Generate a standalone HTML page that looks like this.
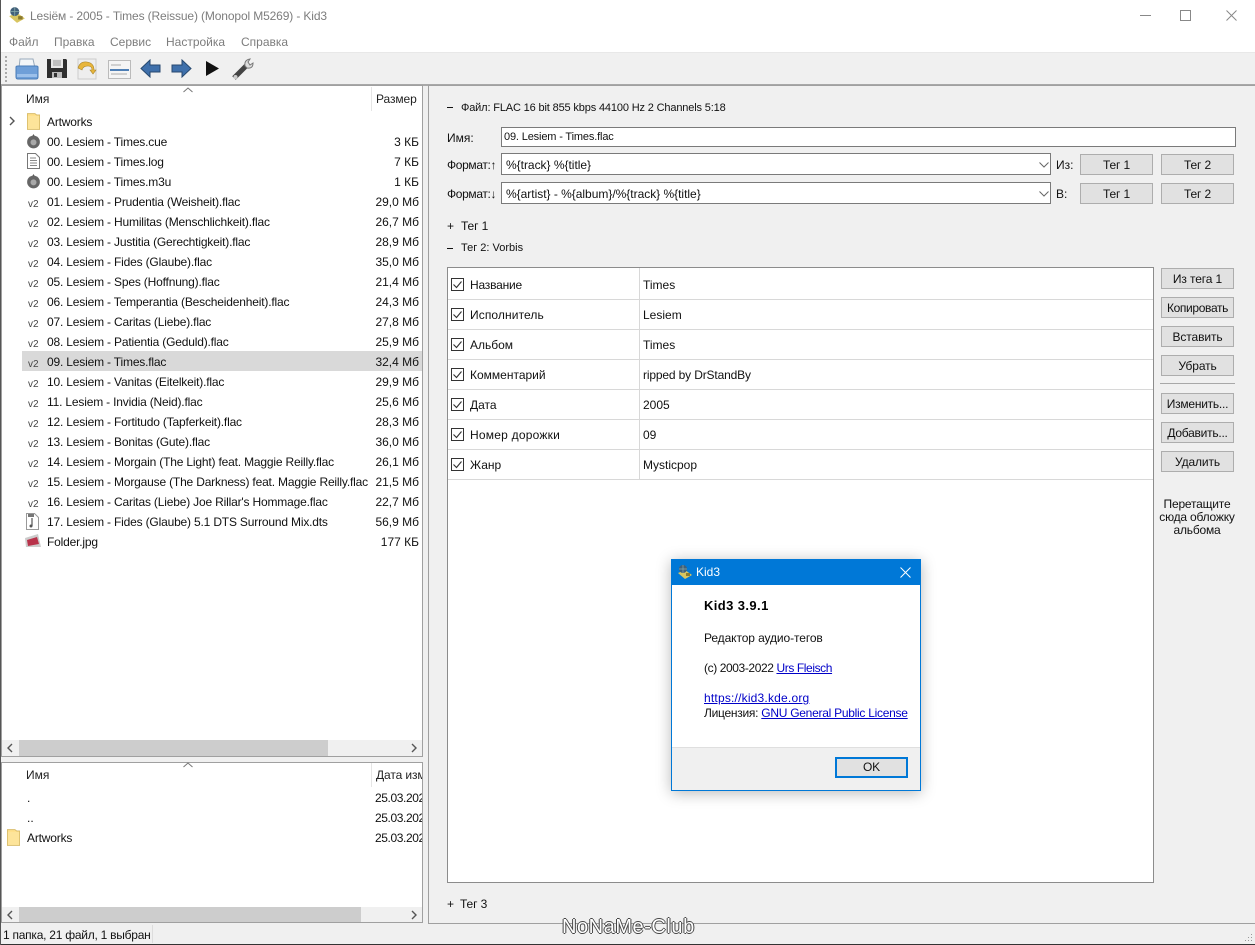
<!DOCTYPE html>
<html lang="ru"><head><meta charset="utf-8"><title>Kid3</title>
<style>
html,body{margin:0;padding:0;width:1255px;height:945px;overflow:hidden;background:#f0f0f0}
body{position:relative;font:12px/20px "Liberation Sans","DejaVu Sans",sans-serif;color:#111}
.t,.b,svg.i{position:absolute}
.t{white-space:nowrap}
.f{letter-spacing:-.18px}
.r{text-align:right}
.b{box-sizing:border-box}
.btn{position:absolute;box-sizing:border-box;width:73px;height:21px;background:#e1e1e1;border:1px solid #adadad;text-align:center;line-height:21px;white-space:nowrap;letter-spacing:-.12px}
.inp{position:absolute;box-sizing:border-box;background:#fff;border:1px solid #7a7a7a;line-height:19px;white-space:nowrap}
.v{position:absolute;left:28px;font-size:10px;line-height:12px;color:#444}
a{color:#0000c8;text-decoration:underline}
.m{color:#7d7d7d}
.hl{position:absolute;left:448px;width:705px;height:1px;background:#d8d8d8}
.cb{position:absolute;left:451px;width:13px;height:13px}
</style></head><body>
<svg width="0" height="0" style="position:absolute"><defs>
<symbol id="disc" viewBox="0 0 16 16"><path d="M8 0.5l1.500 2.500h-3z" fill="#555"/><circle cx="8" cy="9" r="6.800" fill="#666"/><circle cx="8" cy="9.500" r="3.200" fill="#a8a8a8"/></symbol>
<symbol id="fold" viewBox="0 0 14 18"><path d="M.5.5h8l2 1.500h3v15.500h-13z" fill="#ffe08a" stroke="#d9bd6c"/><path d="M1 3h12v14H1z" fill="#fde49a"/></symbol>
<symbol id="chk" viewBox="0 0 13 13"><rect x=".5" y=".5" width="12" height="12" fill="#fff" stroke="#333"/><path d="M2.500 6.500l3 3 5-6" fill="none" stroke="#333" stroke-width="1.100"/></symbol>
<symbol id="app" viewBox="0 0 16 16"><path d="M1 9l7 6 7-4-7-5z" fill="#d8c560"/><circle cx="6" cy="5" r="4" fill="#41607a"/><path d="M6 1v8M2 5h8" stroke="#8aa" stroke-width=".7"/><rect x="9" y="9" width="4" height="3" fill="#8a7a30"/></symbol>
<symbol id="l" viewBox="0 0 6 10"><path d="M5 1L1 5l4 4" fill="none" stroke="#555" stroke-width="1.400"/></symbol>
<symbol id="rr" viewBox="0 0 6 10"><path d="M1 1l4 4-4 4" fill="none" stroke="#555" stroke-width="1.400"/></symbol>
<symbol id="dn" viewBox="0 0 10 6"><path d="M.5.500L5 5 9.500.5" fill="none" stroke="#666"/></symbol>
<symbol id="up" viewBox="0 0 10 6"><path d="M.5 5L5 1l4.500 4" fill="none" stroke="#777"/></symbol>
</defs></svg>

<!-- Title bar & menu -->
<div class="b" style="left:0;top:0;width:1255px;height:52px;background:#fff"></div>
<svg class="i" style="left:8px;top:6px" width="18" height="18"><use href="#app"/></svg>
<div class="t m" style="left:30px;top:6px;letter-spacing:-.13px">Lesiём - 2005 - Times (Reissue) (Monopol M5269) - Kid3</div>
<div class="b" style="left:1140px;top:15px;width:11px;height:1px;background:#888"></div>
<div class="b" style="left:1180px;top:10px;width:11px;height:11px;border:1px solid #888"></div>
<svg class="i" style="left:1226px;top:10px" width="11" height="11"><path d="M.5.5l10 10M10.500.5l-10 10" stroke="#888"/></svg>
<div class="t m" style="left:9px;top:32px">Файл</div>
<div class="t m" style="left:54px;top:32px">Правка</div>
<div class="t m" style="left:110px;top:32px">Сервис</div>
<div class="t m" style="left:166px;top:32px">Настройка</div>
<div class="t m" style="left:241px;top:32px">Справка</div>

<!-- Toolbar -->
<div class="b" style="left:0;top:52px;width:1255px;height:33px;background:#f0f0f0;border-top:1px solid #e8e8e8"></div>
<div class="b" style="left:5px;top:56px;width:2px;height:26px;border-left:2px dotted #aaa"></div>
<svg class="i" style="left:14px;top:58px" width="26" height="22" viewBox="0 0 26 22"><path d="M6 1h13l2 9H5z" fill="#f4f6f8" stroke="#9ab"/><path d="M2 9q0-1 2-1h18q2 0 2 1v10q0 2-2 2H4q-2 0-2-2z" fill="#6f9fd8" stroke="#4a7cb8"/><path d="M3 16h20v3H3z" fill="#9cc0ea"/></svg>
<svg class="i" style="left:47px;top:58px" width="20" height="21" viewBox="0 0 20 21"><path d="M0 1h19l1 1v18H0z" fill="#2f2f2f"/><path d="M4 1h12v9H4z" fill="#e8e8e8"/><path d="M6 3h8M6 5h8M6 7h8" stroke="#999"/><path d="M5 14h10v6H5z" fill="#bcbcbc"/><path d="M7 15h3v4H7z" fill="#333"/></svg>
<svg class="i" style="left:77px;top:58px" width="20" height="22" viewBox="0 0 20 22"><path d="M1 1h18v20H1z" fill="#eee" stroke="#ccc"/><path d="M1 10q2-7 9-6 7 1 7 8h2l-3 4-3-4h2q0-4-4-4-5 0-6 4z" fill="#e8b63c" stroke="#a8842a" stroke-width=".6"/></svg>
<svg class="i" style="left:108px;top:60px" width="23" height="19" viewBox="0 0 23 19"><path d="M.5.500h22v18H.5z" fill="#f5f5f5" stroke="#bbb"/><path d="M3 5h10M3 14h16" stroke="#aaa"/><path d="M2 9h19v2H2z" fill="#4f7fb5"/></svg>
<svg class="i" style="left:140px;top:59px" width="21" height="19" viewBox="0 0 21 19"><path d="M10 1v5h10v7H10v5L1 9.500z" fill="#3f70ab" stroke="#27496f"/></svg>
<svg class="i" style="left:171px;top:59px" width="21" height="19" viewBox="0 0 21 19"><path d="M11 1v5H1v7h10v5l9-8.500z" fill="#3f70ab" stroke="#27496f"/></svg>
<svg class="i" style="left:205px;top:60px" width="15" height="17" viewBox="0 0 15 17"><path d="M1 1l13 7.500L1 16z" fill="#111"/></svg>
<svg class="i" style="left:232px;top:57px" width="23" height="24" viewBox="0 0 23 24"><path d="M2 21L14 9" stroke="#444" stroke-width="5"/><circle cx="3.500" cy="20" r="2" fill="#ccc"/><path d="M13 9q-1-6 5-7l-2 3 2 3 3-2q0 6-6 5z" fill="#ddd" stroke="#777"/></svg>
<div class="b" style="left:0;top:84px;width:1255px;height:2px;background:#a8a8a8"></div>

<!-- Left top pane -->
<div class="b" style="left:1px;top:85px;width:422px;height:672px;background:#fff;border:1px solid #a0a0a0"></div>
<svg class="i" style="left:183px;top:87px" width="10" height="6"><use href="#up"/></svg>
<div class="t" style="left:26px;top:89px;color:#222">Имя</div>
<div class="b" style="left:371px;top:87px;width:1px;height:24px;background:#e5e5e5"></div>
<div class="t" style="left:376px;top:89px;color:#222;letter-spacing:-.1px">Размер</div>
<svg class="i" style="left:9px;top:116px" width="6" height="10"><use href="#rr"/></svg>
<svg class="i" style="left:27px;top:113px" width="13" height="17"><use href="#fold"/></svg>
<div class="t f" style="left:47px;top:112px">Artworks</div>

<svg class="i" style="left:26px;top:133px" width="15" height="16"><use href="#disc"/></svg>
<svg class="i" style="left:27px;top:153px" width="13" height="16" viewBox="0 0 13 16"><path d="M.5.500h8l4 4v11H.5z" fill="#fff" stroke="#777"/><path d="M3 5h6M3 7.500h7M3 10h7M3 12.500h7" stroke="#888"/></svg>
<svg class="i" style="left:26px;top:173px" width="15" height="16"><use href="#disc"/></svg>
<div class="b" style="left:22px;top:351px;width:400px;height:20px;background:#d9d9d9"></div>

<div class="t f" style="left:47px;top:132px">00. Lesiem - Times.cue</div>
<div class="t f" style="left:47px;top:152px">00. Lesiem - Times.log</div>
<div class="t f" style="left:47px;top:172px">00. Lesiem - Times.m3u</div>
<div class="t f" style="left:47px;top:192px">01. Lesiem - Prudentia (Weisheit).flac</div>
<div class="t f" style="left:47px;top:212px">02. Lesiem - Humilitas (Menschlichkeit).flac</div>
<div class="t f" style="left:47px;top:232px">03. Lesiem - Justitia (Gerechtigkeit).flac</div>
<div class="t f" style="left:47px;top:252px">04. Lesiem - Fides (Glaube).flac</div>
<div class="t f" style="left:47px;top:272px">05. Lesiem - Spes (Hoffnung).flac</div>
<div class="t f" style="left:47px;top:292px">06. Lesiem - Temperantia (Bescheidenheit).flac</div>
<div class="t f" style="left:47px;top:312px">07. Lesiem - Caritas (Liebe).flac</div>
<div class="t f" style="left:47px;top:332px">08. Lesiem - Patientia (Geduld).flac</div>
<div class="t f" style="left:47px;top:352px">09. Lesiem - Times.flac</div>
<div class="t f" style="left:47px;top:372px">10. Lesiem - Vanitas (Eitelkeit).flac</div>
<div class="t f" style="left:47px;top:392px">11. Lesiem - Invidia (Neid).flac</div>
<div class="t f" style="left:47px;top:412px">12. Lesiem - Fortitudo (Tapferkeit).flac</div>
<div class="t f" style="left:47px;top:432px">13. Lesiem - Bonitas (Gute).flac</div>
<div class="t f" style="left:47px;top:452px">14. Lesiem - Morgain (The Light) feat. Maggie Reilly.flac</div>
<div class="t f" style="left:47px;top:472px">15. Lesiem - Morgause (The Darkness) feat. Maggie Reilly.flac</div>
<div class="t f" style="left:47px;top:492px">16. Lesiem - Caritas (Liebe) Joe Rillar's Hommage.flac</div>
<div class="t f" style="left:47px;top:512px">17. Lesiem - Fides (Glaube) 5.1 DTS Surround Mix.dts</div>
<div class="t f" style="left:47px;top:532px">Folder.jpg</div>

<div class="v" style="top:199px">v2</div><div class="v" style="top:219px">v2</div><div class="v" style="top:239px">v2</div><div class="v" style="top:259px">v2</div><div class="v" style="top:279px">v2</div><div class="v" style="top:299px">v2</div><div class="v" style="top:319px">v2</div><div class="v" style="top:339px">v2</div><div class="v" style="top:359px">v2</div><div class="v" style="top:379px">v2</div><div class="v" style="top:399px">v2</div><div class="v" style="top:419px">v2</div><div class="v" style="top:439px">v2</div><div class="v" style="top:459px">v2</div><div class="v" style="top:479px">v2</div><div class="v" style="top:499px">v2</div>
<svg class="i" style="left:26px;top:513px" width="13" height="17" viewBox="0 0 13 17"><path d="M.5.500h8l4 4v12H.5z" fill="#fff" stroke="#999"/><path d="M2 1h6v3H2z" fill="#777"/><path d="M6 5v8" stroke="#555" stroke-width="1.200"/><circle cx="5" cy="13" r="1.500" fill="#555"/></svg>
<svg class="i" style="left:25px;top:533px" width="16" height="16" viewBox="0 0 16 16"><path d="M0 5L13 1l3 13H1z" fill="#ccc"/><path d="M2 7l10-3 2 7-11 2z" fill="#b8324a"/></svg>

<div class="t r" style="left:360px;width:59px;top:132px">3 КБ</div>
<div class="t r" style="left:360px;width:59px;top:152px">7 КБ</div>
<div class="t r" style="left:360px;width:59px;top:172px">1 КБ</div>
<div class="t r" style="left:360px;width:59px;top:192px">29,0 Мб</div>
<div class="t r" style="left:360px;width:59px;top:212px">26,7 Мб</div>
<div class="t r" style="left:360px;width:59px;top:232px">28,9 Мб</div>
<div class="t r" style="left:360px;width:59px;top:252px">35,0 Мб</div>
<div class="t r" style="left:360px;width:59px;top:272px">21,4 Мб</div>
<div class="t r" style="left:360px;width:59px;top:292px">24,3 Мб</div>
<div class="t r" style="left:360px;width:59px;top:312px">27,8 Мб</div>
<div class="t r" style="left:360px;width:59px;top:332px">25,9 Мб</div>
<div class="t r" style="left:360px;width:59px;top:352px">32,4 Мб</div>
<div class="t r" style="left:360px;width:59px;top:372px">29,9 Мб</div>
<div class="t r" style="left:360px;width:59px;top:392px">25,6 Мб</div>
<div class="t r" style="left:360px;width:59px;top:412px">28,3 Мб</div>
<div class="t r" style="left:360px;width:59px;top:432px">36,0 Мб</div>
<div class="t r" style="left:360px;width:59px;top:452px">26,1 Мб</div>
<div class="t r" style="left:360px;width:59px;top:472px">21,5 Мб</div>
<div class="t r" style="left:360px;width:59px;top:492px">22,7 Мб</div>
<div class="t r" style="left:360px;width:59px;top:512px">56,9 Мб</div>
<div class="t r" style="left:360px;width:59px;top:532px">177 КБ</div>

<div class="b" style="left:2px;top:740px;width:420px;height:16px;background:#f0f0f0"></div>
<div class="b" style="left:19px;top:740px;width:309px;height:16px;background:#cdcdcd"></div>
<svg class="i" style="left:7px;top:743px" width="6" height="10"><use href="#l"/></svg>
<svg class="i" style="left:411px;top:743px" width="6" height="10"><use href="#rr"/></svg>

<!-- Left bottom pane -->
<div class="b" style="left:1px;top:762px;width:422px;height:161px;background:#fff;border:1px solid #a0a0a0;overflow:hidden"></div>
<svg class="i" style="left:183px;top:762px" width="10" height="6"><use href="#up"/></svg>
<div class="t" style="left:26px;top:765px;color:#222">Имя</div>
<div class="b" style="left:371px;top:763px;width:1px;height:24px;background:#e5e5e5"></div>
<div class="t" style="left:376px;top:765px;width:46px;overflow:hidden;color:#222;letter-spacing:-.1px">Дата изменения</div>
<div class="t" style="left:27px;top:788px">.</div>
<div class="t" style="left:27px;top:808px">..</div>
<svg class="i" style="left:7px;top:829px" width="13" height="17"><use href="#fold"/></svg>
<div class="t f" style="left:27px;top:828px">Artworks</div>
<div class="t" style="left:375px;top:788px;width:47px;overflow:hidden;letter-spacing:-.4px">25.03.2022</div>
<div class="t" style="left:375px;top:808px;width:47px;overflow:hidden;letter-spacing:-.4px">25.03.2022</div>
<div class="t" style="left:375px;top:828px;width:47px;overflow:hidden;letter-spacing:-.4px">25.03.2022</div>
<div class="b" style="left:2px;top:907px;width:420px;height:15px;background:#f0f0f0"></div>
<div class="b" style="left:19px;top:907px;width:342px;height:15px;background:#cdcdcd"></div>
<svg class="i" style="left:7px;top:910px" width="6" height="10"><use href="#l"/></svg>
<svg class="i" style="left:411px;top:910px" width="6" height="10"><use href="#rr"/></svg>

<!-- Right panel -->
<div class="b" style="left:428px;top:85px;width:827px;height:839px;border:1px solid #a0a0a0;border-right:0;background:#f0f0f0"></div>
<div class="b" style="left:447px;top:107px;width:6px;height:1px;background:#111"></div>
<div class="t" style="left:461px;top:98px;font-size:11px;letter-spacing:-.15px">Файл: FLAC 16 bit 855 kbps 44100 Hz 2 Channels 5:18</div>
<div class="t" style="left:447px;top:128px">Имя:</div>
<div class="inp" style="left:501px;top:127px;width:735px;height:20px;padding-left:2px;font-size:11px;letter-spacing:-.15px">09. Lesiem - Times.flac</div>
<div class="t" style="left:447px;top:155px;letter-spacing:-.35px">Формат:↑</div>
<div class="inp" style="left:501px;top:153px;width:550px;height:22px;padding:2px 0 0 4px;letter-spacing:-.02px">%{track} %{title}</div>
<svg class="i" style="left:1039px;top:162px" width="10" height="6"><use href="#dn"/></svg>
<div class="t" style="left:447px;top:184px;letter-spacing:-.35px">Формат:↓</div>
<div class="inp" style="left:501px;top:182px;width:550px;height:22px;padding:2px 0 0 4px;letter-spacing:-.02px">%{artist} - %{album}/%{track} %{title}</div>
<svg class="i" style="left:1039px;top:191px" width="10" height="6"><use href="#dn"/></svg>
<div class="t" style="left:1056px;top:155px">Из:</div>
<div class="t" style="left:1056px;top:184px">В:</div>
<div class="btn" style="left:1080px;top:154px">Тег 1</div>
<div class="btn" style="left:1161px;top:154px">Тег 2</div>
<div class="btn" style="left:1080px;top:183px">Тег 1</div>
<div class="btn" style="left:1161px;top:183px">Тег 2</div>
<div class="t" style="left:447px;top:216px">+</div>
<div class="t" style="left:461px;top:216px;letter-spacing:-.1px">Тег 1</div>
<div class="b" style="left:447px;top:248px;width:6px;height:1px;background:#111"></div>
<div class="t" style="left:461px;top:238px;font-size:11px;letter-spacing:0">Тег 2: Vorbis</div>

<!-- Table -->
<div class="b" style="left:447px;top:267px;width:707px;height:616px;background:#fff;border:1px solid #8c8c8c"></div>
<div class="hl" style="top:299px"></div><div class="hl" style="top:329px"></div><div class="hl" style="top:359px"></div><div class="hl" style="top:389px"></div><div class="hl" style="top:419px"></div><div class="hl" style="top:449px"></div><div class="hl" style="top:479px"></div>
<div class="b" style="left:639px;top:268px;width:1px;height:211px;background:#d8d8d8"></div>
<svg class="cb" style="top:278px"><use href="#chk"/></svg><svg class="cb" style="top:308px"><use href="#chk"/></svg><svg class="cb" style="top:338px"><use href="#chk"/></svg><svg class="cb" style="top:368px"><use href="#chk"/></svg><svg class="cb" style="top:398px"><use href="#chk"/></svg><svg class="cb" style="top:428px"><use href="#chk"/></svg><svg class="cb" style="top:458px"><use href="#chk"/></svg>
<div class="t" style="left:470px;top:275px;letter-spacing:-.2px">Название</div><div class="t" style="left:643px;top:275px">Times</div>
<div class="t" style="left:470px;top:305px;letter-spacing:.1px">Исполнитель</div><div class="t" style="left:643px;top:305px">Lesiem</div>
<div class="t" style="left:470px;top:335px">Альбом</div><div class="t" style="left:643px;top:335px">Times</div>
<div class="t" style="left:470px;top:365px">Комментарий</div><div class="t" style="left:643px;top:365px;letter-spacing:-.15px">ripped by DrStandBy</div>
<div class="t" style="left:470px;top:395px">Дата</div><div class="t" style="left:643px;top:395px">2005</div>
<div class="t" style="left:470px;top:425px;letter-spacing:.22px">Номер дорожки</div><div class="t" style="left:643px;top:425px">09</div>
<div class="t" style="left:470px;top:455px">Жанр</div><div class="t" style="left:643px;top:455px">Mysticpop</div>

<div class="btn" style="left:1161px;top:268px">Из тега 1</div>
<div class="btn" style="left:1161px;top:297px;letter-spacing:-.35px">Копировать</div>
<div class="btn" style="left:1161px;top:326px">Вставить</div>
<div class="btn" style="left:1161px;top:355px">Убрать</div>
<div class="b" style="left:1160px;top:383px;width:75px;height:1px;background:#a8a8a8"></div>
<div class="btn" style="left:1161px;top:393px;letter-spacing:-.25px">Изменить...</div>
<div class="btn" style="left:1161px;top:422px;letter-spacing:-.25px">Добавить...</div>
<div class="btn" style="left:1161px;top:451px">Удалить</div>
<div class="t" style="left:1147px;width:100px;top:498px;line-height:13px;text-align:center;letter-spacing:-.2px">Перетащите<br>сюда обложку<br>альбома</div>
<div class="t" style="left:447px;top:894px">+</div>
<div class="t" style="left:460px;top:894px;letter-spacing:-.1px">Тег 3</div>

<!-- Status bar -->
<div class="t" style="left:3px;top:925px;letter-spacing:-.25px">1 папка, 21 файл, 1 выбран</div>
<div class="b" style="left:152px;top:925px;width:1px;height:18px;background:#ddd"></div>
<div class="b" style="left:0;top:944px;width:1255px;height:1px;background:#333"></div>
<svg class="i" style="left:1243px;top:933px" width="10" height="10"><path d="M8 1h1v1H8zM5 4h1v1H5zM8 4h1v1H8zM2 7h1v1H2zM5 7h1v1H5zM8 7h1v1H8z" fill="#999"/></svg>
<div class="t" style="left:562px;top:916px;font-size:20px;line-height:22px;color:#fff;letter-spacing:.55px;text-shadow:-1px 0 #444,1px 0 #444,0 -1px #444,0 1px #444">NoNaMe-Club</div>
<div class="b" style="left:0;top:0;width:1px;height:945px;background:#555"></div>

<!-- Dialog -->
<div class="b" style="left:671px;top:559px;width:250px;height:232px;background:#fff;border:1px solid #0078d7;box-shadow:0 2px 14px rgba(0,0,0,.28)"></div>
<div class="b" style="left:671px;top:559px;width:250px;height:26px;background:#0078d7"></div>
<svg class="i" style="left:677px;top:564px" width="16" height="16"><use href="#app"/></svg>
<div class="t" style="left:696px;top:562px;color:#fff">Kid3</div>
<svg class="i" style="left:900px;top:567px" width="11" height="11"><path d="M.5.500l10 10M10.500.500l-10 10" stroke="#fff"/></svg>
<div class="t" style="left:704px;top:596px;font-weight:bold;font-size:13px;color:#000;letter-spacing:.4px">Kid3 3.9.1</div>
<div class="t" style="left:704px;top:628px;letter-spacing:-.1px">Редактор аудио-тегов</div>
<div class="t" style="left:704px;top:658px;letter-spacing:-.4px">(c) 2003-2022 <a>Urs Fleisch</a></div>
<div class="t" style="left:704px;top:688px;letter-spacing:.2px"><a>https://kid3.kde.org</a></div>
<div class="t" style="left:704px;top:703px;letter-spacing:-.27px">Лицензия: <a>GNU General Public License</a></div>
<div class="b" style="left:672px;top:747px;width:248px;height:43px;background:#f0f0f0;border-top:1px solid #dfdfdf"></div>
<div class="btn" style="left:835px;top:757px;border:2px solid #0078d7;height:21px;line-height:17px">OK</div>
</body></html>
